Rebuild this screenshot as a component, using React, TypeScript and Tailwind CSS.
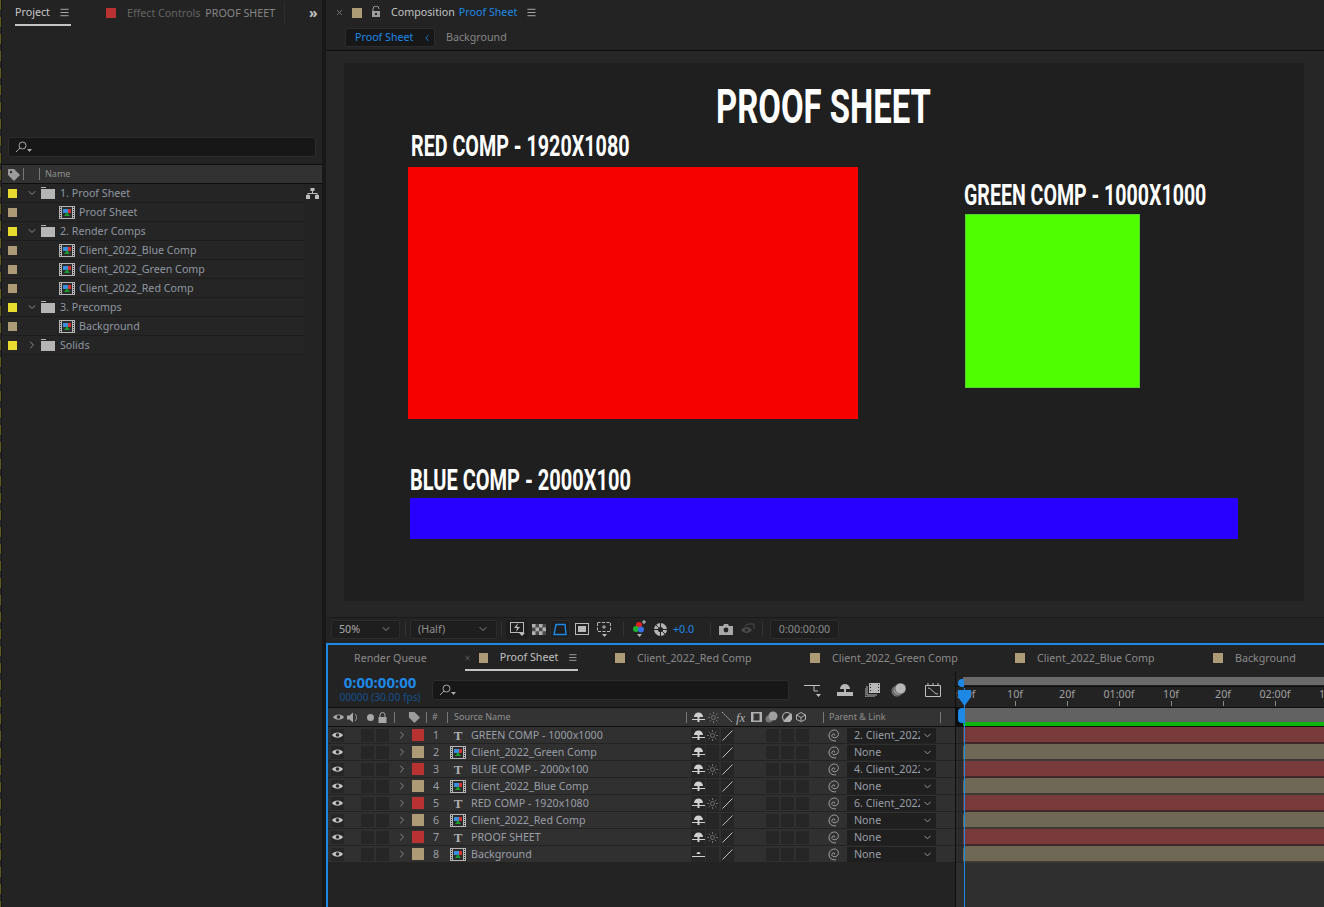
import { ChevronDown, ChevronRight, ChevronLeft, X, Menu } from "lucide-react"

const projectRows = [
  { label: "1. Proof Sheet", folder: true, open: true },
  { label: "Proof Sheet" },
  { label: "2. Render Comps", folder: true, open: true },
  { label: "Client_2022_Blue Comp" },
  { label: "Client_2022_Green Comp" },
  { label: "Client_2022_Red Comp" },
  { label: "3. Precomps", folder: true, open: true },
  { label: "Background" },
  { label: "Solids", folder: true, open: false },
]

const layers = [
  { n: 1, name: "GREEN COMP - 1000x1000", text: true, parent: "2. Client_2022" },
  { n: 2, name: "Client_2022_Green Comp", text: false, parent: "None" },
  { n: 3, name: "BLUE COMP - 2000x100", text: true, parent: "4. Client_2022" },
  { n: 4, name: "Client_2022_Blue Comp", text: false, parent: "None" },
  { n: 5, name: "RED COMP - 1920x1080", text: true, parent: "6. Client_2022" },
  { n: 6, name: "Client_2022_Red Comp", text: false, parent: "None" },
  { n: 7, name: "PROOF SHEET", text: true, parent: "None" },
  { n: 8, name: "Background", text: false, parent: "None" },
]

const ruler = ["0:00f", "10f", "20f", "01:00f", "10f", "20f", "02:00f", "10f"]

function CompIcon({ className = "" }: { className?: string }) {
  return (
    <svg width="16" height="13" viewBox="0 0 16 13" className={className}>
      <rect x="0" y="0" width="16" height="13" fill="#b5b5b5" />
      <rect x="1" y="1" width="1" height="1" fill="#222" />
      <rect x="1" y="3" width="1" height="1" fill="#222" />
      <rect x="1" y="5" width="1" height="1" fill="#222" />
      <rect x="1" y="7" width="1" height="1" fill="#222" />
      <rect x="1" y="9" width="1" height="1" fill="#222" />
      <rect x="1" y="11" width="1" height="1" fill="#222" />
      <rect x="14" y="1" width="1" height="1" fill="#222" />
      <rect x="14" y="3" width="1" height="1" fill="#222" />
      <rect x="14" y="5" width="1" height="1" fill="#222" />
      <rect x="14" y="7" width="1" height="1" fill="#222" />
      <rect x="14" y="9" width="1" height="1" fill="#222" />
      <rect x="14" y="11" width="1" height="1" fill="#222" />
      <rect x="3" y="1" width="10" height="11" fill="#2b2b2b" />
      <rect x="8" y="3" width="4" height="4" fill="#d23030" />
      <rect x="4" y="3" width="5" height="4" fill="#3a8ee0" />
      <path d="M5 10 L8 6 L11 10 Z" fill="#1c9a2c" />
    </svg>
  )
}

function Folder() {
  return (
    <svg width="14" height="12" viewBox="0 0 14 12">
      <rect x="0" y="0" width="5" height="1" fill="#b5b5b5" />
      <rect x="0" y="2" width="14" height="10" fill="#b5b5b5" />
    </svg>
  )
}

function SearchGlyph() {
  return (
    <svg width="18" height="12" viewBox="0 0 18 12" fill="none" stroke="#a8a8a8">
      <circle cx="7.5" cy="4.5" r="3.5" />
      <path d="M5 7 L1 11" />
      <path d="M12 8 h5 l-2.5 3 Z" fill="#a8a8a8" stroke="none" />
    </svg>
  )
}

function Eye({ color = "#c4c4c4" }: { color?: string }) {
  return (
    <svg width="11" height="8" viewBox="0 0 11 8">
      <path d="M0 4 C2 0.5 9 0.5 11 4 C9 7.5 2 7.5 0 4 Z" fill={color} />
      <circle cx="5.5" cy="4" r="1.8" fill="#2a2a2a" />
    </svg>
  )
}

function Shy({ flat = false }: { flat?: boolean }) {
  if (flat) {
    return (
      <svg width="13" height="9" viewBox="0 0 13 9">
        <path d="M4.5 4 a2 2 0 0 1 4 0 Z" fill="#cfcfcf" />
        <rect x="0" y="6" width="13" height="1" fill="#cfcfcf" />
      </svg>
    )
  }
  return (
    <svg width="13" height="11" viewBox="0 0 13 11">
      <path d="M2 5 a4.5 4.5 0 0 1 9 0 Z" fill="#d0d0d0" />
      <rect x="5.5" y="5" width="2" height="5" fill="#d0d0d0" />
      <rect x="0" y="7" width="13" height="1" fill="#d0d0d0" />
    </svg>
  )
}

function Sun() {
  return (
    <svg width="11" height="11" viewBox="0 0 11 11" fill="none" stroke="#6f6f6f">
      <circle cx="5.5" cy="5.5" r="2" />
      <path d="M5.5 0 v2 M5.5 9 v2 M0 5.5 h2 M9 5.5 h2 M1.7 1.7 l1.4 1.4 M7.9 7.9 l1.4 1.4 M1.7 9.3 l1.4 -1.4 M7.9 3.1 l1.4 -1.4" />
    </svg>
  )
}

function Spiral({ color = "#a4a4a4" }: { color?: string }) {
  return (
    <svg width="13" height="13" viewBox="0 0 13 13" fill="none" stroke={color} strokeWidth="1">
      <path d="M6.5 6.5 C7.5 5 5 4 4 6 C3 8.5 7 10 9.5 7.5 C11.5 5 10 1 6.5 1 C3 1 0.8 4 1 7 C1.2 10 4 12.3 8 11.8" />
    </svg>
  )
}

function Toolbar() {
  return (
    <div className="h-[26px] flex items-center bg-[#232323] text-[10.7px] pl-[5px] pb-[3px] border-t border-[#1a1a1a]">
      <div className="w-[69px] h-[19px] flex items-center justify-between px-[7px] bg-[#1e1e1e] rounded-[2px] border border-[#2b2b2b] text-[#a8a8a8]">
        50%
        <ChevronDown size={12} className="text-[#8a8a8a]" />
      </div>
      <div className="w-px h-[14px] bg-[#333] ml-[5px]" />
      <div className="w-[87px] h-[19px] flex items-center justify-between px-[7px] ml-[4px] bg-[#1e1e1e] rounded-[2px] border border-[#2b2b2b] text-[#8f8f8f]">
        (Half)
        <ChevronDown size={12} className="text-[#8a8a8a]" />
      </div>
      <div className="w-px h-[14px] bg-[#333] ml-[4px]" />
      <div className="h-[19px] w-[22px] ml-[4px] flex items-center justify-center bg-[#1e1e1e] rounded-[2px]">
        <svg width="15" height="14" viewBox="0 0 15 14" fill="none">
          <rect x="0.5" y="0.5" width="13" height="10" stroke="#b8b8b8" />
          <path d="M8 1 L4 6 H7 L6 10 L10 5 H7 Z" fill="#b8b8b8" />
          <path d="M9 11 h6 l-3 3 Z" fill="#b8b8b8" />
        </svg>
      </div>
      <div className="w-[22px] flex justify-center">
        <svg width="14" height="11" viewBox="0 0 14 11">
          <rect width="14" height="11" fill="#4b4b4b" />
          <path d="M0 0 h3.5 v3.6 h-3.5 Z M7 0 h3.5 v3.6 h-3.5 Z M3.5 3.6 h3.5 v3.6 h-3.5 Z M10.5 3.6 h3.5 v3.6 h-3.5 Z M0 7.2 h3.5 v3.8 h-3.5 Z M7 7.2 h3.5 v3.8 h-3.5 Z" fill="#b0b0b0" />
        </svg>
      </div>
      <div className="w-[20px] h-[19px] flex items-center justify-center bg-[#1e1e1e] rounded-[2px] border border-[#2b2b2b]">
        <svg width="14" height="13" viewBox="0 0 14 13" fill="none" stroke="#1e88e5" strokeWidth="1.4">
          <path d="M3 1.5 H12 L13 11.5 H1 Z" />
        </svg>
      </div>
      <div className="w-[24px] flex justify-center">
        <svg width="14" height="12" viewBox="0 0 14 12" fill="none">
          <rect x="0.5" y="0.5" width="13" height="11" stroke="#b8b8b8" />
          <rect x="3" y="3" width="8" height="6" fill="#b8b8b8" />
        </svg>
      </div>
      <div className="w-[20px] flex justify-center">
        <svg width="14" height="15" viewBox="0 0 14 15" fill="none" stroke="#b8b8b8">
          <path d="M0.5 0.5 H13.5 V9.5 H0.5 Z" strokeDasharray="3 1.5" />
          <path d="M7 3 v4 M5 5 h4" />
          <path d="M5 12 h5 l-2.5 3 Z" fill="#b8b8b8" stroke="none" />
        </svg>
      </div>
      <div className="w-px h-[14px] bg-[#333] ml-[9px]" />
      <div className="w-[16px] h-[18px] ml-[8px]">
        <svg width="16" height="18" viewBox="0 0 16 18">
          <circle cx="7" cy="5" r="3" fill="#e02020" />
          <circle cx="4" cy="9" r="3" fill="#19b533" />
          <circle cx="9" cy="9.5" r="3" fill="#3a6fe8" />
          <path d="M12 0 v4 M10 2 h4" stroke="#c8c8c8" />
          <path d="M5 14 h5 l-2.5 3 Z" fill="#b8b8b8" />
        </svg>
      </div>
      <div className="ml-[6px] w-[13px] h-[13px]">
        <svg width="13" height="13" viewBox="0 0 13 13">
          <circle cx="6.5" cy="6.5" r="6.5" fill="#b4b4b4" />
          <circle cx="6.5" cy="6.5" r="2.6" fill="#232323" />
          <path d="M6.5 0 L6.5 4 M13 6.5 L9 6.5 M6.5 13 L6.5 9 M0 6.5 L4 6.5 M2 2 L4.7 4.7 M11 11 L8.3 8.3" stroke="#232323" />
        </svg>
      </div>
      <span className="ml-[6px] text-[#1e88e5] w-[28px]">+0.0</span>
      <div className="w-px h-[14px] bg-[#333] ml-[9px]" />
      <div className="ml-[8px] w-[14px]">
        <svg width="14" height="11" viewBox="0 0 14 11">
          <path d="M0 2 H4 L5 0 H9 L10 2 H14 V11 H0 Z" fill="#a8a8a8" />
          <circle cx="7" cy="6" r="2.4" fill="#232323" />
        </svg>
      </div>
      <div className="ml-[8px] w-[14px]">
        <svg width="14" height="12" viewBox="0 0 14 12">
          <path d="M0 7 C3 3 8 3 11 7 C8 11 3 11 0 7 Z" fill="#4a4a4a" />
          <circle cx="5.5" cy="7" r="1.5" fill="#232323" />
          <path d="M4 3 L7 1 H13 V6" stroke="#4a4a4a" fill="none" />
        </svg>
      </div>
      <div className="w-px h-[14px] bg-[#333] ml-[7px]" />
      <div className="w-[69px] h-[19px] ml-[7px] flex items-center justify-center bg-[#1e1e1e] rounded-[2px] border border-[#2b2b2b] text-[#8a8a8a]">
        0:00:00:00
      </div>
    </div>
  )
}

function ProjectPanel() {
  return (
    <div className="w-[326px] shrink-0 flex bg-[#181818]">
      <div className="w-px bg-[repeating-linear-gradient(to_bottom,#5f5a20_0px,#5f5a20_10px,#2a2a2a_10px,#2a2a2a_17px)]" />
      <div className="w-px bg-[#181818]" />
      <div className="w-[320px] bg-[#232323] flex flex-col">
        <div className="h-[26px] flex items-center text-[10.7px] whitespace-nowrap">
          <div className="ml-[13px] w-[56px] shrink-0 h-[24px] mt-[1px] flex items-center border-b-2 border-[#c4c4c4] gap-[9px] text-[#c8c8c8]">
            Project
            <Menu size={11} className="text-[#b4b4b4]" />
          </div>
          <div className="ml-[35px] w-[10px] h-[10px] shrink-0 bg-[#b83232]" />
          <span className="ml-[11px] text-[#636363]">Effect Controls</span>
          <span className="ml-[5px] text-[#858585]">PROOF SHEET</span>
          <div className="ml-[9px] w-px h-[20px] bg-[#2e2e2e]" />
          <span className="ml-[24px] text-[14px] leading-none font-bold text-[#c0c0c0]">»</span>
        </div>
        <div className="h-[111px]" />
        <div className="mx-[6px] h-[20px] bg-[#171717] border border-[#2c2c2c] rounded-[3px] flex items-center pl-[6px]">
          <SearchGlyph />
        </div>
        <div className="h-[7px]" />
        <div className="h-[20px] bg-[#323232] border-t border-b border-[#0e0e0e] flex items-center text-[9px] text-[#8f8f8f]">
          <svg width="13" height="13" viewBox="0 0 13 13" className="ml-[5px]">
            <path d="M1 1 H7 L13 7 L7 13 L1 7 Z" fill="#9b9b9b" />
            <circle cx="4" cy="4" r="1.2" fill="#323232" />
          </svg>
          <div className="ml-[3px] w-px h-[12px] bg-[#777]" />
          <div className="ml-[15px] w-px h-[12px] bg-[#777]" />
          <span className="ml-[5px]">Name</span>
        </div>
        <div className="flex">
          <div className="w-[302px]">
            {projectRows.map((r, i) => (
              <div key={i} className="h-[19px] flex items-center bg-[#252525] border-b border-[#1d1d1d] text-[10.7px] text-[#8f96a0]">
                <div className={r.folder ? "ml-[6px] w-[9px] h-[9px] bg-[#e8dc2e]" : "ml-[6px] w-[9px] h-[9px] bg-[#ad9b76]"} />
                {r.folder ? (
                  <>
                    <div className="w-[9px] ml-[9px] text-[#8a8a8a]">
                      {r.open ? <ChevronDown size={12} /> : <ChevronRight size={12} />}
                    </div>
                    <div className="ml-[6px] flex">
                      <Folder />
                    </div>
                    <span className="ml-[5px]">{r.label}</span>
                  </>
                ) : (
                  <>
                    <CompIcon className="ml-[42px]" />
                    <span className="ml-[4px]">{r.label}</span>
                  </>
                )}
              </div>
            ))}
          </div>
          <div className="pl-[2px] pt-[4px]">
            <svg width="13" height="11" viewBox="0 0 13 11" fill="#bdbdbd">
              <rect x="4.5" y="0" width="4" height="3" />
              <rect x="0" y="7" width="4" height="4" />
              <rect x="9" y="7" width="4" height="4" />
              <path d="M6 3 h1 v2 h4.5 v2 h-1 v-1 h-8 v1 h-1 v-2 h4.5 Z" />
            </svg>
          </div>
        </div>
      </div>
      <div className="w-[4px] bg-[#181818]" />
    </div>
  )
}

function CompCanvas() {
  const heading = "absolute whitespace-nowrap origin-left font-['Roboto',sans-serif] font-bold text-white leading-none"
  return (
    <div className="relative h-full bg-[#1f1f1f] overflow-hidden">
      <span className={heading + " left-[372px] top-[20px] text-[48px] scale-x-[0.685]"}>PROOF SHEET</span>
      <span className={heading + " left-[67px] top-[69px] text-[29px] scale-x-[0.68]"}>RED COMP - 1920X1080</span>
      <div className="absolute left-[64px] top-[104px] w-[450px] h-[252px] bg-[#f60000]" />
      <span className={heading + " left-[620px] top-[118px] text-[29px] scale-x-[0.675]"}>GREEN COMP - 1000X1000</span>
      <div className="absolute left-[621px] top-[151px] w-[175px] h-[174px] bg-[#4dff00] border border-[#58d030]" />
      <span className={heading + " left-[66px] top-[403px] text-[29px] scale-x-[0.69]"}>BLUE COMP - 2000X100</span>
      <div className="absolute left-[66px] top-[435px] w-[828px] h-[41px] bg-[#2800ff]" />
    </div>
  )
}

function CompPanel() {
  return (
    <div className="h-[643px] flex flex-col bg-[#232323] text-[10.7px]">
      <div className="h-[25px] flex items-center">
        <X size={9} className="ml-[9px] text-[#8a8a8a]" />
        <div className="ml-[8px] w-[10px] h-[10px] bg-[#ad9b76]" />
        <svg width="10" height="11" viewBox="0 0 10 11" className="ml-[9px] mb-[3px]">
          <path d="M2 5 V3 a3 3 0 0 1 6 0" stroke="#9c9c9c" fill="none" />
          <rect x="1" y="5" width="8" height="6" fill="#9c9c9c" />
          <rect x="4" y="7" width="2" height="2" fill="#232323" />
        </svg>
        <span className="ml-[10px] text-[#c4c4c4]">Composition</span>
        <span className="ml-[4px] text-[#1e88e5]">Proof Sheet</span>
        <Menu size={11} className="ml-[9px] text-[#b4b4b4]" />
      </div>
      <div className="h-[25px] flex items-center">
        <div className="ml-[19px] w-[90px] h-[19px] bg-[#171717] border border-[#2b2b2b] rounded-[2px] flex items-center justify-between pl-[9px] pr-[2px] text-[#1e88e5]">
          Proof Sheet
          <ChevronLeft size={10} />
        </div>
        <span className="ml-[11px] text-[#868686]">Background</span>
      </div>
      <div className="h-[1px] bg-[#0c0c0c]" />
      <div className="flex-1 pl-[18px] pr-[20px] pt-[12px] pb-[16px] bg-[#262626]">
        <CompCanvas />
      </div>
      <Toolbar />
    </div>
  )
}

function LayerRow({ l }: { l: (typeof layers)[number] }) {
  const box = "w-[13px] h-[13px] bg-[#262626]"
  return (
    <div className="h-[17px] flex items-center bg-[#303030] border-b border-[#232323] text-[10.7px] text-[#9a9ea6]">
      <div className="ml-[3px] w-[13px] h-[13px] bg-[#262626] flex items-center justify-center">
        <Eye />
      </div>
      <div className={box + " ml-[17px]"} />
      <div className={box + " ml-[2px]"} />
      <ChevronRight size={12} className="ml-[7px] text-[#8a8a8a]" />
      <div className={l.text ? "ml-[4px] w-[12px] h-[12px] bg-[#b83232]" : "ml-[4px] w-[12px] h-[12px] bg-[#ad9b76]"} />
      <span className="ml-[9px] w-[17px]">{l.n}</span>
      <div className="w-[16px] flex justify-center">
        {l.text ? (
          <span className="font-['Liberation_Serif',serif] font-bold text-[13px] leading-none text-[#b0b0b0]">T</span>
        ) : (
          <CompIcon />
        )}
      </div>
      <span className="ml-[5px] w-[220px] whitespace-nowrap">{l.name}</span>
      <div className="w-[14px] h-[15px] bg-[#262626] flex items-center justify-center">
        <Shy flat={l.n === 8} />
      </div>
      <div className="ml-px w-[13px] h-[15px] bg-[#262626] flex items-center justify-center">
        {l.text && <Sun />}
      </div>
      <div className="ml-[2px] w-[13px] h-[15px] bg-[#262626] flex items-center justify-center">
        <svg width="11" height="11" viewBox="0 0 11 11">
          <path d="M0.5 10.5 L10.5 0.5" stroke="#bdbdbd" />
        </svg>
      </div>
      <div className={box + " ml-[32px]"} />
      <div className={box + " ml-[2px]"} />
      <div className={box + " ml-[2px]"} />
      <div className="ml-[19px] flex">
        <Spiral />
      </div>
      <div className="ml-[6px] w-[89px] h-[15px] bg-[#1f1f1f] flex items-center justify-between pl-[7px] pr-[3px]">
        <span className="w-[66px] overflow-hidden whitespace-nowrap">{l.parent}</span>
        <ChevronDown size={11} className="text-[#a0a0a0]" />
      </div>
    </div>
  )
}

function TimelinePanel() {
  return (
    <div className="relative flex-1 min-h-0 flex flex-col bg-[#232323] border-t-2 border-l-2 border-[#1e88e5] text-[10.7px] whitespace-nowrap">
      <div className="h-[27px] flex items-center">
        <div className="w-[137px] pl-[26px] text-[#8a8a8a]">Render Queue</div>
        <div className="w-[113px] h-[25px] flex items-center border-b-2 border-[#c4c4c4]">
          <X size={8} className="text-[#8a8a8a] ml-[-1px]" />
          <div className="ml-[8px] w-[10px] h-[10px] bg-[#ad9b76]" />
          <span className="ml-[12px] text-[#c0c0c0]">Proof Sheet</span>
          <Menu size={11} className="ml-[10px] text-[#b4b4b4]" />
        </div>
        <div className="w-[37px]" />
        <div className="w-[195px] flex items-center">
          <div className="w-[10px] h-[10px] bg-[#ad9b76]" />
          <span className="ml-[12px] text-[#8a8a8a]">Client_2022_Red Comp</span>
        </div>
        <div className="w-[205px] flex items-center">
          <div className="w-[10px] h-[10px] bg-[#ad9b76]" />
          <span className="ml-[12px] text-[#8a8a8a]">Client_2022_Green Comp</span>
        </div>
        <div className="w-[198px] flex items-center">
          <div className="w-[10px] h-[10px] bg-[#ad9b76]" />
          <span className="ml-[12px] text-[#8a8a8a]">Client_2022_Blue Comp</span>
        </div>
        <div className="flex items-center">
          <div className="w-[10px] h-[10px] bg-[#ad9b76]" />
          <span className="ml-[12px] text-[#8a8a8a]">Background</span>
        </div>
      </div>
      <div className="flex-1 min-h-0 flex">
        <div className="w-[628px] shrink-0 flex flex-col border-r border-[#0e0e0e]">
          <div className="h-[35px] flex items-center">
            <div className="w-[104px] flex flex-col items-center mb-[1px]">
              <span className="text-[15px] leading-[15px] font-bold text-[#1e88e5]">0:00:00:00</span>
              <span className="text-[10.2px] leading-[14px] text-[#14508c]">00000 (30.00 fps)</span>
            </div>
            <div className="w-[357px] h-[20px] bg-[#171717] border border-[#2c2c2c] rounded-[3px] flex items-center pl-[6px]">
              <SearchGlyph />
            </div>
            <svg width="18" height="14" viewBox="0 0 18 14" fill="none" stroke="#c0c0c0" className="ml-[15px]">
              <path d="M0 2.5 H6 M6 2.5 H10 V8 H14 M10 2.5 H16" />
              <path d="M12 11 h5 l-2.5 3 Z" fill="#c0c0c0" stroke="none" />
            </svg>
            <svg width="16" height="12" viewBox="0 0 16 12" className="ml-[15px]">
              <path d="M3 5 a5 5 0 0 1 10 0 Z" fill="#b8b8b8" />
              <rect x="7" y="5" width="2" height="3" fill="#b8b8b8" />
              <rect x="0" y="8" width="16" height="4" fill="#b8b8b8" />
            </svg>
            <svg width="15" height="14" viewBox="0 0 15 14" className="ml-[12px]">
              <path d="M4 0 H15 V10 H4 Z" fill="#b8b8b8" />
              <path d="M5 1 h1 v1 h-1 Z M5 4 h1 v1 h-1 Z M5 7 h1 v1 h-1 Z M13 1 h1 v1 h-1 Z M13 4 h1 v1 h-1 Z M13 7 h1 v1 h-1 Z" fill="#232323" />
              <path d="M2 3 V12 H12" stroke="#b8b8b8" fill="none" />
              <path d="M0 5 V14 H10" stroke="#b8b8b8" fill="none" />
            </svg>
            <svg width="15" height="14" viewBox="0 0 15 14" className="ml-[11px]">
              <circle cx="6" cy="8" r="5.5" fill="#7a7a7a" />
              <circle cx="7.5" cy="7" r="5.5" fill="#9a9a9a" stroke="#232323" strokeWidth="0.5" />
              <circle cx="9.5" cy="5.5" r="5.5" fill="#b8b8b8" stroke="#232323" strokeWidth="0.5" />
            </svg>
            <svg width="16" height="14" viewBox="0 0 16 14" fill="none" stroke="#c0c0c0" className="ml-[19px]">
              <path d="M0.5 2.5 H15.5 V13.5 H0.5 Z M3 0 V2 M8 0 V2 M13 0 V2" />
              <path d="M3 5 C7 5 8 11 13 11" />
            </svg>
          </div>
          <div className="h-[20px] bg-[#333333] border-t border-b border-[#0e0e0e] flex items-center text-[9px] text-[#8f8f8f]">
            <div className="ml-[5px] flex">
              <Eye color="#a8a8a8" />
            </div>
            <svg width="11" height="11" viewBox="0 0 11 11" className="ml-[3px]">
              <path d="M0 3.5 H2.5 L6 0.5 V10.5 L2.5 7.5 H0 Z" fill="#a8a8a8" />
              <path d="M8 2 C10 4 10 7 8 9" stroke="#a8a8a8" fill="none" />
            </svg>
            <div className="ml-[9px] w-[7px] h-[7px] rounded-full bg-[#a8a8a8]" />
            <svg width="9" height="11" viewBox="0 0 9 11" className="ml-[4px]">
              <path d="M2 5 V3 a2.5 2.5 0 0 1 5 0 V5" stroke="#a8a8a8" fill="none" />
              <rect x="0.5" y="5" width="8" height="6" fill="#a8a8a8" />
            </svg>
            <div className="ml-[7px] w-px h-[11px] bg-[#777]" />
            <svg width="12" height="12" viewBox="0 0 13 13" className="ml-[13px]">
              <path d="M1 1 H7 L13 7 L7 13 L1 7 Z" fill="#9b9b9b" />
            </svg>
            <div className="ml-[6px] w-px h-[11px] bg-[#777]" />
            <span className="ml-[5px] w-[9px]">#</span>
            <div className="ml-[6px] w-px h-[11px] bg-[#777]" />
            <span className="ml-[6px] w-[232px]">Source Name</span>
            <div className="w-px h-[11px] bg-[#777]" />
            <div className="ml-[5px] flex">
              <Shy />
            </div>
            <div className="ml-[3px] flex">
              <Sun />
            </div>
            <svg width="10" height="10" viewBox="0 0 10 10" className="ml-[3px]">
              <path d="M0 0 L10 10" stroke="#b0b0b0" strokeDasharray="2 1" />
            </svg>
            <span className="ml-[4px] w-[12px] italic text-[13px] leading-none text-[#b0b0b0] font-['Liberation_Serif',serif]">fx</span>
            <svg width="11" height="10" viewBox="0 0 11 10" className="ml-[3px]">
              <rect width="11" height="10" fill="#b0b0b0" />
              <rect x="2.5" y="1.5" width="6" height="7" fill="#333" />
            </svg>
            <svg width="13" height="12" viewBox="0 0 13 12" className="ml-[3px]">
              <circle cx="4" cy="8" r="3.5" fill="#777" />
              <circle cx="8" cy="5" r="4.5" fill="#a0a0a0" />
            </svg>
            <svg width="10" height="10" viewBox="0 0 9 9" className="ml-[4px]">
              <circle cx="4.5" cy="4.5" r="4" fill="#333" stroke="#b0b0b0" />
              <path d="M8 1 A4.5 4.5 0 0 1 1 8 Z" fill="#b0b0b0" />
            </svg>
            <svg width="10" height="10" viewBox="0 0 10 10" fill="none" stroke="#b0b0b0" className="ml-[4px]">
              <path d="M5 0.5 L9.5 3 V7.5 L5 9.5 L0.5 7.5 V3 Z M0.5 3 L5 5.5 L9.5 3 M5 5.5 V9.5" />
            </svg>
            <div className="ml-[17px] w-px h-[11px] bg-[#777]" />
            <span className="ml-[5px] w-[111px]">Parent &amp; Link</span>
            <div className="w-px h-[11px] bg-[#777]" />
          </div>
          {layers.map((l) => (
            <LayerRow key={l.n} l={l} />
          ))}
        </div>
        <div className="flex-1 min-w-0 flex flex-col bg-[#2f2f2f] overflow-hidden">
          <div className="h-[35px] bg-[#232323] flex flex-col justify-end">
            <div className="h-[8px] ml-[7px] bg-[#6a6a6a] mb-[1px]" />
            <div className="h-[21px] border-t border-[#0e0e0e] ml-[-19px] flex">
              {ruler.map((label, i) => (
                <div key={i} className="w-[52px] shrink-0 h-[20px] flex flex-col items-center">
                  <span className="text-[10.7px] leading-[14px] text-[#a0a0a0]">{label}</span>
                  <div className={i === 0 ? "hidden" : "w-px h-[5px] bg-[#8a8a8a]"} />
                </div>
              ))}
            </div>
          </div>
          <div className="h-[20px] bg-[#0e0e0e] border-t border-[#0e0e0e]">
            <div className="ml-[7px] h-[14px] bg-[#626262]" />
            <div className="ml-[7px] h-[4px] bg-[#0fb60f]" />
          </div>
          {layers.map((l) => (
            <div key={l.n} className="h-[17px] flex bg-[#303030]">
              <div className="w-[7px] bg-[#2c2c2c] border-b border-[#232323]" />
              <div className={l.text ? "flex-1 bg-[#783a3a] border-b-2 border-[#402828]" : "flex-1 bg-[#6f6857] rounded-tl-[4px] border-b-2 border-[#3e3a32]"} />
            </div>
          ))}
        </div>
      </div>
      {/* playhead runs over the timeline */}
      <div className="absolute left-[636px] top-[43px] bottom-0 w-px bg-[#1e88e5]" />
      <svg width="13" height="17" viewBox="0 0 13 17" className="absolute left-[630px] top-[45px]">
        <path d="M0 0 H13 V7 L6.5 16 L0 7 Z" fill="#1e88e5" />
      </svg>
      <div className="absolute left-[630px] top-[34px] w-[6px] h-[8px] bg-[#1e88e5] rounded-l-[4px]" />
      <div className="absolute left-[630px] top-[63px] w-[6px] h-[15px] bg-[#1e88e5] rounded-l-[4px]" />
    </div>
  )
}

export default function App() {
  return (
    <div className="w-[1324px] h-[907px] flex overflow-hidden bg-[#181818] font-['Noto_Sans',sans-serif]">
      <ProjectPanel />
      <div className="flex-1 min-w-0 flex flex-col">
        <CompPanel />
        <TimelinePanel />
      </div>
    </div>
  )
}
